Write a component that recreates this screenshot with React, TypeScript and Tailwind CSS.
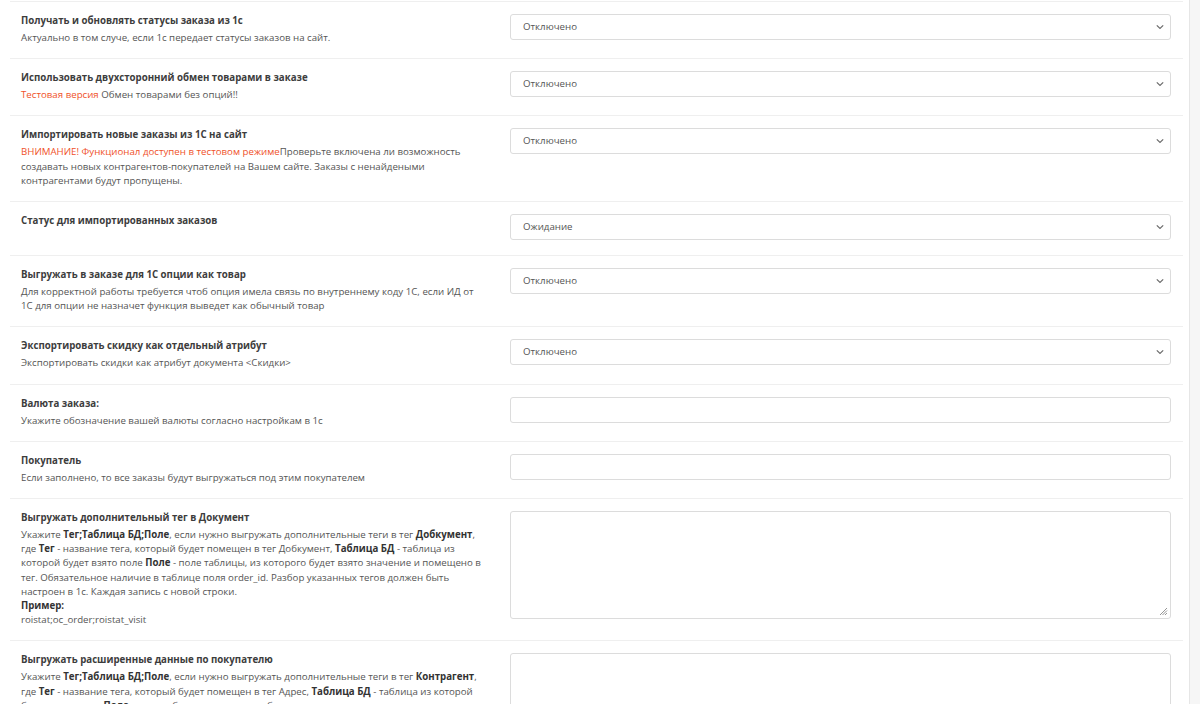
import React from "react";

const Chevron = () => (
  <svg width="8" height="5" viewBox="0 0 8 5" className="absolute right-[6px] top-1/2 -translate-y-1/2">
    <path d="M0.8 0.8 L4 4 L7.2 0.8" fill="none" stroke="#6b6b6b" strokeWidth="1.2" />
  </svg>
);

const Select = ({ value }: { value: string }) => (
  <div className="relative h-[26px] w-full rounded-[3px] border border-[#dcdcdc] bg-white flex items-center pl-[12px] text-[9.7px] text-[#555]">
    {value}
    <Chevron />
  </div>
);

const Input = () => <div className="h-[26px] w-full rounded-[3px] border border-[#dcdcdc] bg-white" />;

const Textarea = ({ h }: { h: string }) => (
  <div className={`relative w-full rounded-[3px] border border-[#dcdcdc] bg-white ${h}`}>
    <svg width="9" height="9" viewBox="0 0 9 9" className="absolute right-[2px] bottom-[2px]">
      <path d="M8 1 L1 8 M8 3.5 L3.5 8 M8 6 L6 8" stroke="#8a8a8a" strokeWidth="0.9" />
    </svg>
  </div>
);

const Row = ({ title, children, control }: { title: string; children?: React.ReactNode; control: React.ReactNode }) => (
  <div className="flex border-t border-[#efefef] pt-[12px] pb-[13px]">
    <div className="w-[500px] shrink-0 pl-[11px] pr-[29px]">
      <div className="text-[9.7px] leading-[13px] font-bold text-[#3d3d3d]">{title}</div>
      {children && <div className="mt-[4px] text-[9.7px] leading-[14.2px] text-[#555]">{children}</div>}
    </div>
    <div className="flex-1 pr-[12px]">{control}</div>
  </div>
);

const Red = ({ children }: { children: React.ReactNode }) => <span className="text-[#f0522a]">{children}</span>;

export default function App() {
  return (
    <div className="min-h-screen bg-[#f6f6f6] flex" style={{ fontFamily: '"Open Sans", "Noto Sans", sans-serif' }}>
      <div className="w-[1190px] shrink-0 bg-white border-r border-[#e6e6e6] pt-[1px] min-h-screen">
        <div className="ml-[10px] w-[1173px]">
          <Row title="Получать и обновлять статусы заказа из 1с" control={<Select value="Отключено" />}>
            Актуально в том случе, если 1с передает статусы заказов на сайт.
          </Row>
          <Row title="Использовать двухсторонний обмен товарами в заказе" control={<Select value="Отключено" />}>
            <Red>Тестовая версия</Red> Обмен товарами без опций!!
          </Row>
          <Row title="Импортировать новые заказы из 1С на сайт" control={<Select value="Отключено" />}>
            <Red>ВНИМАНИЕ! Функционал доступен в тестовом режиме</Red>Проверьте включена ли возможность создавать новых
            контрагентов-покупателей на Вашем сайте. Заказы с ненайдеными контрагентами будут пропущены.
          </Row>
          <Row title="Статус для импортированных заказов" control={<div className="pb-[2px]"><Select value="Ожидание" /></div>} />
          <Row title="Выгружать в заказе для 1С опции как товар" control={<Select value="Отключено" />}>
            Для корректной работы требуется чтоб опция имела связь по внутреннему коду 1С, если ИД от 1С для опции не
            назначет функция выведет как обычный товар
          </Row>
          <Row title="Экспортировать скидку как отдельный атрибут" control={<Select value="Отключено" />}>
            Экспортировать скидки как атрибут документа &lt;Скидки&gt;
          </Row>
          <Row title="Валюта заказа:" control={<Input />}>
            Укажите обозначение вашей валюты согласно настройкам в 1с
          </Row>
          <Row title="Покупатель" control={<Input />}>
            Если заполнено, то все заказы будут выгружаться под этим покупателем
          </Row>
          <Row title="Выгружать дополнительный тег в Документ" control={<Textarea h="h-[108px]" />}>
            Укажите <b className="text-[#333]">Тег;Таблица БД;Поле</b>, если нужно выгружать дополнительные теги в тег{" "}
            <b className="text-[#333]">Добкумент</b>, где <b className="text-[#333]">Тег</b> - название тега, который будет
            помещен в тег Добкумент, <b className="text-[#333]">Таблица БД</b> - таблица из которой будет взято поле{" "}
            <b className="text-[#333]">Поле</b> - поле таблицы, из которого будет взято значение и помещено в тег.
            Обязательное наличие в таблице поля order_id. Разбор указанных тегов должен быть настроен в 1с. Каждая запись с
            новой строки.
            <br />
            <b className="text-[#333]">Пример:</b>
            <br />
            roistat;oc_order;roistat_visit
          </Row>
          <Row title="Выгружать расширенные данные по покупателю" control={<Textarea h="h-[108px]" />}>
            Укажите <b className="text-[#333]">Тег;Таблица БД;Поле</b>, если нужно выгружать дополнительные теги в тег{" "}
            <b className="text-[#333]">Контрагент</b>, где <b className="text-[#333]">Тег</b> - название тега, который будет
            помещен в тег Адрес, <b className="text-[#333]">Таблица БД</b> - таблица из которой будет взято поле{" "}
            <b className="text-[#333]">Поле</b> - поле таблицы, из которого будет взято значение и помещено в тег.
            Обязательное наличие в таблице поля customer_id. Разбор указанных тегов должен быть настроен в 1с.
          </Row>
        </div>
      </div>
    </div>
  );
}
